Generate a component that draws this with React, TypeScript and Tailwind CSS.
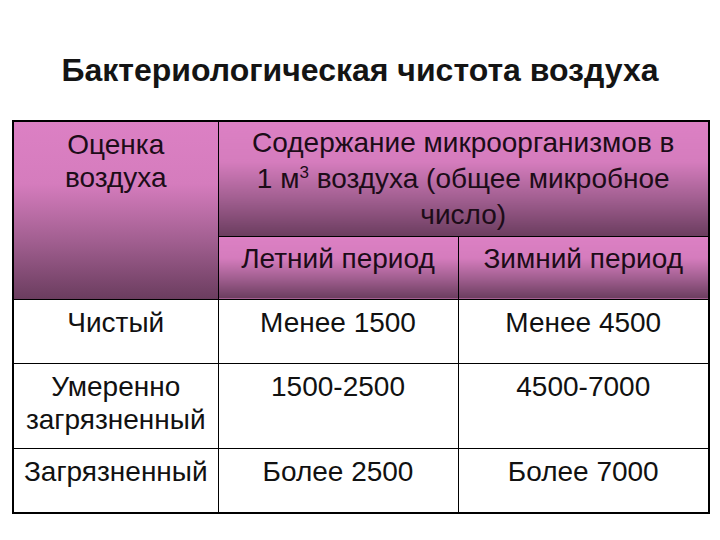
import React from 'react';

const rows = [
  { name: ['Чистый'], summer: 'Менее 1500', winter: 'Менее 4500', h: 'h-[64px]' },
  { name: ['Умеренно', 'загрязненный'], summer: '1500-2500', winter: '4500-7000', h: 'h-[85px]' },
  { name: ['Загрязненный'], summer: 'Более 2500', winter: 'Более 7000', h: 'h-[65px]' },
];

const headBg =
  'bg-[linear-gradient(to_bottom,#dc80c4_0%,#d57cbd_35%,#a05e8f_68%,#6b3d5f_100%)]';

const App = () => {
  return (
    <div className="w-[720px] h-[540px] bg-white font-['Liberation_Sans',Arial,sans-serif] text-[#111]">
      <h1 className="pt-[50px] h-[120px] text-center text-[32px] font-bold leading-[40px] text-[#141414]">
        Бактериологическая чистота воздуха
      </h1>

      <table className="ml-[12px] w-[696px] table-fixed border-collapse border-2 border-black text-[28px]">
        <colgroup>
          <col className="w-[205px]" />
          <col className="w-[240px]" />
          <col className="w-[251px]" />
        </colgroup>
        <thead className="text-[#1c0c18]">
          <tr className="h-[115px]">
            <th rowSpan={2} className={`${headBg} border border-black align-top pt-[6px] font-normal leading-[33px]`}>
              Оценка
              <br />
              воздуха
            </th>
            <th colSpan={2} className={`${headBg} border border-black align-top pt-[3px] font-normal leading-[36px]`}>
              Содержание микроорганизмов в
              <br />1 м<span className="text-[17px] leading-[0] relative -top-[10px]">3</span> воздуха (общее микробное
              <br />
              число)
            </th>
          </tr>
          <tr className="h-[63px]">
            <th className={`${headBg} border border-black align-top pt-[5px] font-normal leading-[33px]`}>
              Летний период
            </th>
            <th className={`${headBg} border border-black align-top pt-[5px] font-normal leading-[33px]`}>
              Зимний период
            </th>
          </tr>
        </thead>
        <tbody>
          {rows.map((r) => (
            <tr key={r.summer} className={r.h}>
              <td className="border border-black align-top pt-[6px] text-center leading-[33px]">
                {r.name.map((n) => (
                  <div key={n}>{n}</div>
                ))}
              </td>
              <td className="border border-black align-top pt-[6px] text-center leading-[33px]">{r.summer}</td>
              <td className="border border-black align-top pt-[6px] text-center leading-[33px]">{r.winter}</td>
            </tr>
          ))}
        </tbody>
      </table>
    </div>
  );
};

export default App;
